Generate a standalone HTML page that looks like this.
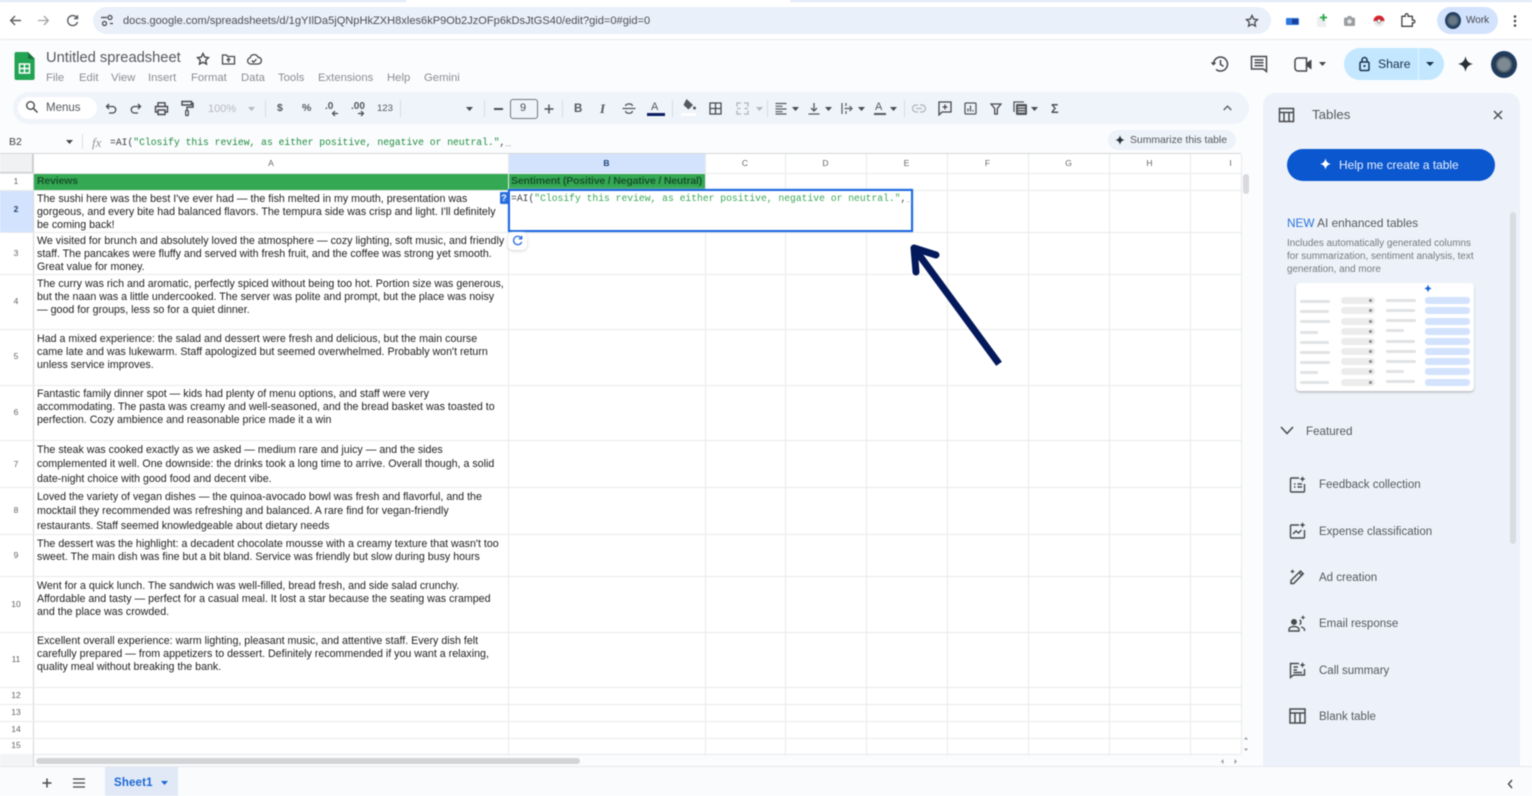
<!DOCTYPE html>
<html><head><meta charset="utf-8"><title>Untitled spreadsheet</title>
<style>
html,body{margin:0;padding:0;width:1532px;height:796px;overflow:hidden;background:#fff}
#p{position:relative;width:1532px;height:796px;overflow:hidden;font-family:"Liberation Sans",sans-serif;background:#fbfcfe;filter:blur(.5px)}
#p div,#p span.a,#p svg{position:absolute}
.t{white-space:nowrap;line-height:14px}
.m{font-size:11.3px;color:#8a8d91;top:71px}
.c{font-size:10.66px;color:#222;white-space:nowrap;line-height:13px;left:37px}
.h{font-size:8.5px;color:#666;text-align:center;line-height:12px}
.r{font-size:8.5px;color:#5f6368;left:0;width:32px;text-align:center;line-height:12px}
.hl{background:#e9eaeb;left:0;width:1241px;height:1px}
.vl{background:#e9eaeb;top:154px;width:1px;height:600px}
.i{fill:none;stroke:#47494c;stroke-width:1.5}
.f{font-size:11.5px;color:#55585c;left:1319px;white-space:nowrap;line-height:14px}
.b1{background:#e1e2e4;height:3px;border-radius:2px}
.b2{background:#ececed;height:7px;border-radius:4px;width:34px}
.b2::after{content:"";position:absolute;right:3px;top:2px;width:3px;height:3px;background:#8e9093;border-radius:1px}
.b3{background:#d3e3fd;height:7px;border-radius:3px;left:1425px;width:45px}
</style></head><body><div id="p">

<!-- browser chrome -->
<div style="left:0;top:0;width:1532px;height:40px;background:#fff"></div>
<div style="left:0;top:0;width:406px;height:2px;background:#dfe8f8"></div>
<div style="left:790px;top:0;width:742px;height:2px;background:#dfe8f8"></div>
<div style="left:0;top:39px;width:1532px;height:1px;background:#e6e8ec"></div>
<svg style="left:8px;top:13px" width="15" height="15" viewBox="0 0 15 15"><path d="M13 7.5H3M7 3L2.7 7.5 7 12" fill="none" stroke="#5b5e62" stroke-width="1.4"/></svg>
<svg style="left:36px;top:13px" width="15" height="15" viewBox="0 0 15 15"><path d="M2 7.5h10M8 3l4.3 4.5L8 12" fill="none" stroke="#a0a3a7" stroke-width="1.3"/></svg>
<svg style="left:65px;top:13px" width="15" height="15" viewBox="0 0 15 15"><path d="M12 5A5 5 0 1 0 12.500 9M12.500 2.200V5.500H9" fill="none" stroke="#5b5e62" stroke-width="1.4"/></svg>
<div style="left:93px;top:7px;width:1178px;height:27px;border-radius:14px;background:#e9f0fa"></div>
<svg style="left:100px;top:14px" width="14" height="13" viewBox="0 0 14 13"><path d="M1 3.500h6M10 9.500h3" stroke="#45484c" stroke-width="1.3" fill="none"/><circle cx="10" cy="3.500" r="2" fill="none" stroke="#45484c" stroke-width="1.2"/><circle cx="4.500" cy="9.500" r="2" fill="none" stroke="#45484c" stroke-width="1.2"/></svg>
<div class="t" style="left:123px;top:14px;font-size:11.08px;color:#4c5054">docs.google.com/spreadsheets/d/1gYIlDa5jQNpHkZXH8xles6kP9Ob2JzOFp6kDsJtGS40/edit?gid=0#gid=0</div>
<svg style="left:1245px;top:14px" width="14" height="14" viewBox="0 0 14 14"><path d="M7 1.500l1.700 3.600 3.800.5-2.800 2.600.8 3.900L7 10.200l-3.500 1.900.8-3.900L1.500 5.600l3.800-.5z" fill="none" stroke="#45484c" stroke-width="1.300"/></svg>
<div style="left:1286px;top:18px;width:13px;height:7px;background:#2f78e0;border-radius:1px"></div>
<div style="left:1292px;top:19px;width:6px;height:5px;background:#1a3f9a"></div>
<div style="left:1317px;top:17px;width:9px;height:10px;background:#eceef0"></div>
<svg style="left:1319px;top:13px" width="9" height="9" viewBox="0 0 9 9"><path d="M4.500 1v7M1 4.500h7" stroke="#2aa84a" stroke-width="1.800"/></svg>
<svg style="left:1343px;top:15px" width="13" height="12" viewBox="0 0 13 12"><rect x="1" y="2.500" width="11" height="8.500" rx="1.500" fill="#9b9ea1"/><rect x="4.500" y="1" width="4" height="2" fill="#9b9ea1"/><circle cx="6.500" cy="6.500" r="2.200" fill="#e5e6e7"/></svg>
<svg style="left:1372px;top:13px" width="14" height="16" viewBox="0 0 14 16"><path d="M1.500 8a5.500 5.500 0 0 1 11 0z" fill="#d9232e"/><path d="M1.500 8a5.500 5.500 0 0 0 11 0z" fill="#e9e9ea"/><circle cx="7" cy="8" r="1.800" fill="#fff" stroke="#555" stroke-width=".6"/></svg>
<svg style="left:1400px;top:12px" width="16" height="16" viewBox="0 0 16 16"><path d="M2 4h3.500V2.700a1.500 1.500 0 0 1 3 0V4H13v4h1.200a1.500 1.500 0 0 1 0 3H13v3.500H2z" fill="none" stroke="#43464a" stroke-width="1.400" transform="translate(0 .5) scale(.95)"/></svg>
<div style="left:1437px;top:7px;width:61px;height:27px;border-radius:14px;background:#d3e3fd"></div>
<div style="left:1445px;top:12px;width:16px;height:17px;border-radius:50%;background:radial-gradient(circle at 50% 50%,#6a7884 0 30%,#1e3b5c 60%,#345a86 100%)"></div>
<div class="t" style="left:1466px;top:14px;font-size:10px;color:#44474b">Work</div>
<svg style="left:1511px;top:14px" width="8" height="14" viewBox="0 0 8 14"><circle cx="4" cy="2.500" r="1.300" fill="#45484c"/><circle cx="4" cy="7" r="1.300" fill="#45484c"/><circle cx="4" cy="11.500" r="1.300" fill="#45484c"/></svg>

<!-- docs header -->
<svg style="left:14px;top:52px" width="22" height="28" viewBox="0 0 22 28"><path d="M2 0h12l7 7v19a2 2 0 0 1-2 2H2a2 2 0 0 1-2-2V2a2 2 0 0 1 2-2z" fill="#23a455" transform="translate(.5 0) scale(.96 1)"/><path d="M14 0l7 7h-7z" fill="#17713a"/><path d="M5.500 12h10v9h-10zM5.500 16.500h10M10.500 12v9" fill="none" stroke="#fff" stroke-width="1.500"/></svg>
<div class="t" style="left:46px;top:51px;font-size:14.7px;color:#55585c">Untitled spreadsheet</div>
<svg style="left:196px;top:52px" width="14" height="14" viewBox="0 0 14 14"><path d="M7 1.500l1.700 3.600 3.800.5-2.800 2.600.8 3.900L7 10.200l-3.500 1.900.8-3.900L1.500 5.600l3.800-.5z" fill="none" stroke="#47494c" stroke-width="1.400"/></svg>
<svg style="left:221px;top:52px" width="15" height="14" viewBox="0 0 15 14"><path d="M1.500 3h4l1 1.500h7V12h-12zM7.500 10.500V6.500M5.700 8.200l1.800-1.800 1.800 1.800" fill="none" stroke="#47494c" stroke-width="1.300"/></svg>
<svg style="left:246px;top:52px" width="16" height="14" viewBox="0 0 16 14"><path d="M4.500 12a3.200 3.200 0 0 1-.4-6.300A4.200 4.200 0 0 1 12 5.200 3.400 3.400 0 0 1 12 12zM5.800 8.500l1.700 1.700 3-3" fill="none" stroke="#47494c" stroke-width="1.300"/></svg>
<div class="t m" style="left:46px">File</div><div class="t m" style="left:79px">Edit</div><div class="t m" style="left:111px">View</div><div class="t m" style="left:148px">Insert</div><div class="t m" style="left:191px">Format</div><div class="t m" style="left:241px">Data</div><div class="t m" style="left:278px">Tools</div><div class="t m" style="left:318px">Extensions</div><div class="t m" style="left:387px">Help</div><div class="t m" style="left:424px">Gemini</div>

<svg style="left:1210px;top:54px" width="20" height="20" viewBox="0 0 20 20"><path d="M3.500 10A7 7 0 1 1 6 15.400M1.500 8.500l2 2 2-2M10.500 6v4.500l3 1.800" fill="none" stroke="#45484c" stroke-width="1.500"/></svg>
<svg style="left:1250px;top:55px" width="18" height="19" viewBox="0 0 18 19"><path d="M1.500 1.500h15v15l-3-2.500h-12zM4.500 5h9M4.500 7.800h9M4.500 10.600h9" fill="none" stroke="#45484c" stroke-width="1.500"/></svg>
<svg style="left:1294px;top:57px" width="19" height="15" viewBox="0 0 19 15"><path d="M4 1h8.500v13H4a3 3 0 0 1-3-3V4a3 3 0 0 1 3-3z" fill="none" stroke="#45484c" stroke-width="1.500"/><path d="M12.500 6l5-3.500v10l-5-3.500z" fill="#45484c"/></svg>
<svg style="left:1319px;top:62px" width="7" height="4"><path d="M0 0h7L3.500 4z" fill="#45484c"/></svg>
<div style="left:1344px;top:48px;width:100px;height:32px;border-radius:16px;background:#c2e7ff"></div>
<div style="left:1418px;top:48px;width:1px;height:32px;background:#eaf6ff"></div>
<svg style="left:1358px;top:56px" width="13" height="16" viewBox="0 0 13 16"><rect x="2" y="6" width="9" height="8.500" rx="1.200" fill="none" stroke="#1f3350" stroke-width="1.500"/><path d="M4 6V4a2.500 2.500 0 0 1 5 0v2" fill="none" stroke="#1f3350" stroke-width="1.500"/><circle cx="6.500" cy="10" r="1.100" fill="#1f3350"/></svg>
<div class="t" style="left:1378px;top:57px;font-size:12.200px;color:#1c2f4a">Share</div>
<svg style="left:1426px;top:62px" width="8" height="4"><path d="M0 0h8L4 4z" fill="#1c2f4a"/></svg>
<svg style="left:1458px;top:55px" width="15" height="18" viewBox="0 0 17 18"><path d="M8.500 0C9.300 5 11.500 8 17 9c-5.500 1-7.700 4-8.500 9C7.700 13 5.500 10 0 9c5.500-1 7.700-4 8.500-9z" fill="#263238"/></svg>
<div style="left:1491px;top:51px;width:26px;height:27px;border-radius:50%;background:radial-gradient(circle at 50% 50%,#7d8a94 0 30%,#23384f 48%,#1f4474 75%,#3b6aa0 100%)"></div>

<!-- toolbar -->
<div style="left:13px;top:92px;width:1236px;height:32px;border-radius:16px;background:#eff3fa"></div>
<div style="left:18px;top:97px;width:79px;height:22px;border-radius:11px;background:#fff"></div>
<svg style="left:25px;top:100px" width="14" height="14" viewBox="0 0 14 14"><circle cx="5.500" cy="5.500" r="3.800" fill="none" stroke="#47494c" stroke-width="1.400"/><path d="M8.300 8.300L12.500 12.500" stroke="#47494c" stroke-width="1.500"/></svg>
<div class="t" style="left:46px;top:101px;font-size:11.5px;color:#54575b">Menus</div>
<svg style="left:104px;top:102px" width="14" height="13" viewBox="0 0 14 13"><path d="M5 2L2.500 4.500 5 7M3 4.500h5.500a3 3 0 0 1 0 6.500H5" fill="none" stroke="#47494c" stroke-width="1.300"/></svg>
<svg style="left:129px;top:102px" width="14" height="13" viewBox="0 0 14 13"><path d="M9 2l2.500 2.500L9 7M11 4.500H5.500a3 3 0 0 0 0 6.500H9" fill="none" stroke="#47494c" stroke-width="1.300"/></svg>
<svg style="left:154px;top:101px" width="15" height="15" viewBox="0 0 15 15"><path d="M4 5V1.800h7V5M4 11H1.500V5.500h12V11H11M4 9h7v4.500H4z" fill="none" stroke="#47494c" stroke-width="1.400"/></svg>
<svg style="left:180px;top:100px" width="14" height="17" viewBox="0 0 14 17"><path d="M2 1.500h9.500v3.500H2zM11.500 3.200h1.500v4H7v3" fill="none" stroke="#47494c" stroke-width="1.400"/><rect x="5.700" y="10.500" width="2.600" height="5" rx=".8" fill="none" stroke="#47494c" stroke-width="1.200"/></svg>
<div class="t" style="left:208px;top:102px;font-size:11px;color:#b8babd">100%</div>
<svg style="left:248px;top:107px" width="7" height="4"><path d="M0 0h7L3.500 4z" fill="#b5b7ba"/></svg>
<div style="left:265px;top:100px;width:1px;height:17px;background:#d9dce1"></div>
<div class="t" style="left:277px;top:101px;font-size:10.500px;font-weight:bold;color:#55585c">$</div>
<div class="t" style="left:302px;top:101px;font-size:10.500px;font-weight:bold;color:#55585c">%</div>
<div class="t" style="left:325px;top:100px;font-size:10px;font-weight:bold;color:#55585c">.0</div>
<svg style="left:331px;top:110px" width="8" height="7" viewBox="0 0 8 7"><path d="M7 3.500H2M4 1L1.500 3.500 4 6" fill="none" stroke="#47494c" stroke-width="1.200"/></svg>
<div class="t" style="left:351px;top:100px;font-size:10px;font-weight:bold;color:#55585c">.00</div>
<svg style="left:357px;top:110px" width="8" height="7" viewBox="0 0 8 7"><path d="M1 3.500h5M4 1l2.500 2.500L4 6" fill="none" stroke="#47494c" stroke-width="1.200"/></svg>
<div class="t" style="left:377px;top:102px;font-size:9.500px;color:#55585c">123</div>
<div style="left:400px;top:100px;width:1px;height:17px;background:#d9dce1"></div>
<svg style="left:466px;top:107px" width="7" height="4"><path d="M0 0h7L3.500 4z" fill="#47494c"/></svg>
<div style="left:484px;top:100px;width:1px;height:17px;background:#d9dce1"></div>
<div style="left:494px;top:108px;width:9px;height:1.500px;background:#4b4e52"></div>
<div style="left:510px;top:99px;width:26px;height:18px;border:1px solid #75787c;border-radius:3px"></div>
<div class="t" style="left:520px;top:101px;font-size:11px;color:#4b4e52">9</div>
<svg style="left:544px;top:104px" width="10" height="10"><path d="M5 .5v9M.5 5h9" stroke="#4b4e52" stroke-width="1.400"/></svg>
<div style="left:562px;top:100px;width:1px;height:17px;background:#d9dce1"></div>
<div class="t" style="left:574px;top:102px;font-size:11.500px;font-weight:bold;color:#55585c">B</div>
<div class="t" style="left:600px;top:102px;font-size:13px;font-weight:bold;font-style:italic;font-family:'Liberation Serif',serif;color:#55585c">I</div>
<svg style="left:622px;top:102px" width="14" height="13" viewBox="0 0 14 13"><path d="M3.500 4C3.800 1.500 10 1 10.500 4M.5 6.500h13M3.500 9c.5 3 6.500 3 7 0" fill="none" stroke="#55585c" stroke-width="1.300"/></svg>
<div class="t" style="left:651px;top:100px;font-size:11px;color:#55585c">A</div>
<div style="left:647px;top:113px;width:18px;height:3px;background:#0b2060"></div>
<div style="left:672px;top:100px;width:1px;height:17px;background:#d9dce1"></div>
<svg style="left:681px;top:98px" width="16" height="14" viewBox="0 0 16 14"><path d="M5.500 1L12 7l-4.500 4.500L2.500 7z" fill="#55585c"/><circle cx="13.500" cy="10" r="1.500" fill="#55585c"/></svg>
<div style="left:681px;top:113px;width:15px;height:3px;background:#fff"></div>
<svg style="left:709px;top:102px" width="13" height="13" viewBox="0 0 13 13"><path d="M1 1h11v11H1zM1 6.500h11M6.500 1v11" fill="none" stroke="#47494c" stroke-width="1.300"/></svg>
<svg style="left:736px;top:102px" width="13" height="13" viewBox="0 0 13 13"><path d="M1 4.500V1h4M8 1h4v3.500M1 8.500V12h4M8 12h4V8.500M1 6.500h3.500M8.500 6.500H12" fill="none" stroke="#b2b4b7" stroke-width="1.300"/></svg>
<svg style="left:756px;top:107px" width="7" height="4"><path d="M0 0h7L3.500 4z" fill="#b5b7ba"/></svg>
<div style="left:767px;top:100px;width:1px;height:17px;background:#d9dce1"></div>
<svg style="left:775px;top:102px" width="12" height="13" viewBox="0 0 12 13"><path d="M.5 1.500h11M.5 4.300h7M.5 7h11M.5 9.700h7M.5 12h11" stroke="#55585c" stroke-width="1.200"/></svg>
<svg style="left:792px;top:107px" width="7" height="4"><path d="M0 0h7L3.500 4z" fill="#47494c"/></svg>
<svg style="left:808px;top:102px" width="12" height="13" viewBox="0 0 12 13"><path d="M6 1v7.500M3 6l3 3 3-3M.5 12h11" fill="none" stroke="#55585c" stroke-width="1.300"/></svg>
<svg style="left:825px;top:107px" width="7" height="4"><path d="M0 0h7L3.500 4z" fill="#47494c"/></svg>
<svg style="left:841px;top:102px" width="12" height="13" viewBox="0 0 12 13"><path d="M1 1v11M5 1v3M5 9v3M3.500 6.500H11M8.500 4l2.500 2.500L8.500 9" fill="none" stroke="#55585c" stroke-width="1.200"/></svg>
<svg style="left:858px;top:107px" width="7" height="4"><path d="M0 0h7L3.500 4z" fill="#47494c"/></svg>
<div class="t" style="left:875px;top:100px;font-size:11px;color:#55585c">A</div>
<div style="left:874px;top:113px;width:12px;height:1.500px;background:#55585c"></div>
<svg style="left:890px;top:107px" width="7" height="4"><path d="M0 0h7L3.500 4z" fill="#47494c"/></svg>
<div style="left:904px;top:100px;width:1px;height:17px;background:#d9dce1"></div>
<svg style="left:912px;top:104px" width="14" height="9" viewBox="0 0 14 9"><path d="M6 1H4a3.300 3.300 0 0 0 0 7h2M8 1h2a3.300 3.300 0 0 1 0 7H8M4 4.500h6" fill="none" stroke="#b2b4b7" stroke-width="1.200"/></svg>
<svg style="left:938px;top:101px" width="14" height="15" viewBox="0 0 14 15"><path d="M1 1h12v10H4l-3 3zM7 3.500v5M4.500 6h5" fill="none" stroke="#47494c" stroke-width="1.300"/></svg>
<svg style="left:964px;top:102px" width="13" height="13" viewBox="0 0 13 13"><rect x="1" y="1" width="11" height="11" rx="1" fill="none" stroke="#55585c" stroke-width="1.300"/><path d="M4 9.500V6.500M6.500 9.500V3.500M9 9.500V8" stroke="#55585c" stroke-width="1.300"/></svg>
<svg style="left:990px;top:103px" width="12" height="12" viewBox="0 0 12 12"><path d="M1 1h10L7.300 5.500V11H4.700V5.500z" fill="none" stroke="#47494c" stroke-width="1.300"/></svg>
<svg style="left:1013px;top:101px" width="15" height="15" viewBox="0 0 15 15"><rect x="3" y="3" width="11" height="11" rx="1" fill="#55585c"/><path d="M1 11V1h10" fill="none" stroke="#55585c" stroke-width="1.300"/><path d="M5 6h7M5 8.500h7M5 11h7" stroke="#eff3fa" stroke-width="1"/></svg>
<svg style="left:1031px;top:107px" width="7" height="4"><path d="M0 0h7L3.500 4z" fill="#47494c"/></svg>
<div class="t" style="left:1051px;top:102px;font-size:12.500px;font-weight:bold;color:#4f5256">Σ</div>
<svg style="left:1223px;top:105px" width="9" height="6" viewBox="0 0 9 6"><path d="M.7 5L4.500 1.200 8.300 5" fill="none" stroke="#55585c" stroke-width="1.300"/></svg>

<!-- formula bar -->
<div class="t" style="left:9px;top:135px;font-size:10.500px;color:#3c4043">B2</div>
<svg style="left:66px;top:140px" width="7" height="4"><path d="M0 0h7L3.500 4z" fill="#47494c"/></svg>
<div style="left:82px;top:134px;width:1px;height:15px;background:#dcdfe3"></div>
<div class="t" style="left:92px;top:136px;font-size:13px;font-style:italic;font-family:'Liberation Serif',serif;color:#909398">fx</div>
<div class="t" style="left:110px;top:136px;font-size:9.7px;font-family:'Liberation Mono',monospace;color:#3c4043">=AI(<span style="color:#1e8e3e">"Closify this review, as either positive, negative or neutral."</span>,<span style="color:#aaa">_</span></div>
<div style="left:1108px;top:130px;width:128px;height:20px;border-radius:10px;background:#eef2f9"></div>
<svg style="left:1115px;top:135px" width="10" height="10" viewBox="0 0 17 18"><path d="M8.500 0C9.300 5 11.500 8 17 9c-5.500 1-7.700 4-8.500 9C7.700 13 5.500 10 0 9c5.500-1 7.700-4 8.500-9z" fill="#263238"/></svg>
<div class="t" style="left:1130px;top:134px;font-size:10.400px;color:#55585c">Summarize this table</div>

<!-- sheet -->
<div style="left:0;top:153px;width:1241px;height:601px;background:#fff"></div>
<div style="left:0;top:153px;width:1241px;height:1px;background:#d5d7da"></div>
<div style="left:0;top:154px;width:32px;height:19px;background:#f0f1f2"></div>
<div style="left:32px;top:154px;width:2px;height:19px;background:#c7c9cc"></div>
<div style="left:0;top:172px;width:34px;height:2px;background:#c7c9cc"></div>
<div style="left:508px;top:154px;width:197px;height:19px;background:#d3e3fd"></div>
<div style="left:0;top:190px;width:33px;height:42px;background:#d3e3fd"></div>
<div style="left:34px;top:173px;width:671px;height:17px;background:#34a853"></div>

<div class="vl" style="left:33px;background:#d4d6d9"></div>
<div class="vl" style="left:508px"></div><div class="vl" style="left:705px"></div><div class="vl" style="left:785px"></div><div class="vl" style="left:866px"></div><div class="vl" style="left:947px"></div><div class="vl" style="left:1028px"></div><div class="vl" style="left:1109px"></div><div class="vl" style="left:1190px"></div><div class="vl" style="left:1241px"></div>
<div class="hl" style="top:173px"></div><div class="hl" style="top:190px"></div><div class="hl" style="top:232px"></div><div class="hl" style="top:274px"></div><div class="hl" style="top:329px"></div><div class="hl" style="top:385px"></div><div class="hl" style="top:440px"></div><div class="hl" style="top:487px"></div><div class="hl" style="top:534px"></div><div class="hl" style="top:576px"></div><div class="hl" style="top:632px"></div><div class="hl" style="top:687px"></div><div class="hl" style="top:704px"></div><div class="hl" style="top:721px"></div><div class="hl" style="top:738px"></div><div class="hl" style="top:754px"></div>

<div class="h" style="left:34px;width:474px;top:157px">A</div><div class="h" style="left:508px;width:197px;top:157px;color:#1f3f73;font-weight:bold">B</div><div class="h" style="left:705px;width:80px;top:157px">C</div><div class="h" style="left:785px;width:81px;top:157px">D</div><div class="h" style="left:866px;width:81px;top:157px">E</div><div class="h" style="left:947px;width:81px;top:157px">F</div><div class="h" style="left:1028px;width:81px;top:157px">G</div><div class="h" style="left:1109px;width:81px;top:157px">H</div><div class="h" style="left:1190px;width:81px;top:157px">I</div>

<div class="r" style="top:175px">1</div><div class="r" style="top:203px;font-weight:bold;color:#1f3f73">2</div><div class="r" style="top:247px">3</div><div class="r" style="top:295px">4</div><div class="r" style="top:350px">5</div><div class="r" style="top:406px">6</div><div class="r" style="top:458px">7</div><div class="r" style="top:504px">8</div><div class="r" style="top:549px">9</div><div class="r" style="top:598px">10</div><div class="r" style="top:653px">11</div><div class="r" style="top:689px">12</div><div class="r" style="top:706px">13</div><div class="r" style="top:723px">14</div><div class="r" style="top:739px">15</div>

<div class="c" style="top:175px;font-weight:bold;color:#17532b;font-size:10.55px;letter-spacing:-.2px">Reviews</div>
<div class="c" style="top:175px;left:511px;font-weight:bold;color:#17532b;font-size:10.55px;letter-spacing:-.2px">Sentiment (Positive / Negative / Neutral)</div>

<div class="c" style="top:193px">The sushi here was the best I've ever had — the fish melted in my mouth, presentation was</div>
<div class="c" style="top:206px">gorgeous, and every bite had balanced flavors. The tempura side was crisp and light. I'll definitely</div>
<div class="c" style="top:219px">be coming back!</div>
<div class="c" style="top:235px">We visited for brunch and absolutely loved the atmosphere — cozy lighting, soft music, and friendly</div>
<div class="c" style="top:248px">staff. The pancakes were fluffy and served with fresh fruit, and the coffee was strong yet smooth.</div>
<div class="c" style="top:261px">Great value for money.</div>
<div class="c" style="top:278px">The curry was rich and aromatic, perfectly spiced without being too hot. Portion size was generous,</div>
<div class="c" style="top:291px">but the naan was a little undercooked. The server was polite and prompt, but the place was noisy</div>
<div class="c" style="top:304px">— good for groups, less so for a quiet dinner.</div>
<div class="c" style="top:333px">Had a mixed experience: the salad and dessert were fresh and delicious, but the main course</div>
<div class="c" style="top:346px">came late and was lukewarm. Staff apologized but seemed overwhelmed. Probably won't return</div>
<div class="c" style="top:359px">unless service improves.</div>
<div class="c" style="top:388px">Fantastic family dinner spot — kids had plenty of menu options, and staff were very</div>
<div class="c" style="top:401px">accommodating. The pasta was creamy and well-seasoned, and the bread basket was toasted to</div>
<div class="c" style="top:414px">perfection. Cozy ambience and reasonable price made it a win</div>
<div class="c" style="top:444px">The steak was cooked exactly as we asked — medium rare and juicy — and the sides</div>
<div class="c" style="top:458px">complemented it well. One downside: the drinks took a long time to arrive. Overall though, a solid</div>
<div class="c" style="top:473px">date-night choice with good food and decent vibe.</div>
<div class="c" style="top:491px">Loved the variety of vegan dishes — the quinoa-avocado bowl was fresh and flavorful, and the</div>
<div class="c" style="top:505px">mocktail they recommended was refreshing and balanced. A rare find for vegan-friendly</div>
<div class="c" style="top:520px">restaurants. Staff seemed knowledgeable about dietary needs</div>
<div class="c" style="top:538px">The dessert was the highlight: a decadent chocolate mousse with a creamy texture that wasn't too</div>
<div class="c" style="top:551px">sweet. The main dish was fine but a bit bland. Service was friendly but slow during busy hours</div>
<div class="c" style="top:580px">Went for a quick lunch. The sandwich was well-filled, bread fresh, and side salad crunchy.</div>
<div class="c" style="top:593px">Affordable and tasty — perfect for a casual meal. It lost a star because the seating was cramped</div>
<div class="c" style="top:606px">and the place was crowded.</div>
<div class="c" style="top:635px">Excellent overall experience: warm lighting, pleasant music, and attentive staff. Every dish felt</div>
<div class="c" style="top:648px">carefully prepared — from appetizers to dessert. Definitely recommended if you want a relaxing,</div>
<div class="c" style="top:661px">quality meal without breaking the bank.</div>

<!-- active cell -->
<div style="left:508px;top:189px;width:401px;height:39px;border:2px solid #1a66e0;background:#fff;box-shadow:0 0 2px #a9c5f5"></div>
<div style="left:500px;top:192px;width:8px;height:12px;background:#2b6fe0;color:#fff;font-size:9px;font-weight:bold;line-height:12px;text-align:center;border-radius:1px 0 0 1px">?</div>
<div class="t" style="left:511px;top:192px;font-size:9.7px;font-family:'Liberation Mono',monospace;color:#3c4043">=AI(<span style="color:#3aa856">"Closify this review, as either positive, negative or neutral."</span>,<span style="color:#bbb">_</span></div>
<div style="left:508px;top:232px;width:19px;height:18px;border-radius:5px;background:#fff;box-shadow:0 1px 3px #d0d2d6"></div>
<svg style="left:512px;top:235px" width="11" height="11" viewBox="0 0 11 11"><path d="M9.500 3.500A4.200 4.200 0 1 0 9.700 7M9.700 .8v3H6.800" fill="none" stroke="#2b6fe0" stroke-width="1.300"/></svg>

<!-- arrow -->
<svg style="left:900px;top:235px" width="110" height="140" viewBox="0 0 110 140"><path d="M97 126L17 17" stroke="#04195c" stroke-width="7" stroke-linecap="square" fill="none"/><path d="M16 37L14 13 36 20" stroke="#04195c" stroke-width="7" stroke-linecap="round" stroke-linejoin="round" fill="none"/></svg>

<!-- sheet scrollbars -->
<div style="left:1243px;top:174px;width:6px;height:20px;background:#d8dadd;border-radius:3px"></div>
<div style="left:36px;top:758px;width:544px;height:6px;background:#d3d4d6;border-radius:3px"></div>
<div style="left:0;top:754px;width:34px;height:12px;background:#f3f4f5"></div>
<div style="left:33px;top:754px;width:1px;height:12px;background:#d4d6d9"></div>
<svg style="left:1243px;top:736px" width="6" height="16" viewBox="0 0 6 16"><path d="M1 3.500L3 1l2 2.500zM1 12.500L3 15l2-2.500z" fill="#9a9c9f"/></svg>
<svg style="left:1219px;top:758px" width="20" height="7" viewBox="0 0 20 7"><path d="M4.500 1L2 3.500 4.500 6zM15.500 1L18 3.500 15.500 6z" fill="#9a9c9f"/></svg>
<div style="left:0;top:766px;width:1532px;height:1px;background:#e6e8ec"></div>

<!-- bottom bar -->
<div style="left:0;top:767px;width:1532px;height:29px;background:#fafbfd"></div>
<svg style="left:42px;top:778px" width="10" height="10"><path d="M5 .5v9M.5 5h9" stroke="#47494c" stroke-width="1.500"/></svg>
<svg style="left:73px;top:778px" width="12" height="10"><path d="M0 1h12M0 5h12M0 9h12" stroke="#47494c" stroke-width="1.300"/></svg>
<div style="left:105px;top:767px;width:73px;height:29px;background:#e1e9f7"></div>
<div class="t" style="left:114px;top:776px;font-size:11.500px;font-weight:bold;color:#1a67d2;letter-spacing:.15px">Sheet1</div>
<svg style="left:161px;top:781px" width="7" height="4"><path d="M0 0h7L3.500 4z" fill="#1a67d2"/></svg>
<svg style="left:1507px;top:779px" width="6" height="10" viewBox="0 0 6 10"><path d="M5 1L1.500 5 5 9" fill="none" stroke="#47494c" stroke-width="1.400"/></svg>

<!-- side panel -->
<div style="left:1263px;top:93px;width:257px;height:673px;background:#edf2fa;border-radius:12px 12px 0 0"></div>
<svg style="left:1278px;top:107px" width="18" height="16" viewBox="0 0 18 16"><path d="M1.500 1.500h14v13h-14zM1.500 5.500h14M6 5.500v9M11 5.500v9" class="i"/></svg>
<div class="t" style="left:1312px;top:108px;font-size:13.3px;color:#55585c">Tables</div>
<svg style="left:1493px;top:110px" width="10" height="10"><path d="M1 1l8 8M9 1l-8 8" stroke="#47494c" stroke-width="1.400"/></svg>
<div style="left:1287px;top:149px;width:208px;height:32px;border-radius:16px;background:#0b57d0"></div>
<svg style="left:1320px;top:158px" width="11" height="12" viewBox="0 0 17 18"><path d="M8.500 0C9.300 5 11.500 8 17 9c-5.500 1-7.700 4-8.500 9C7.700 13 5.500 10 0 9c5.500-1 7.700-4 8.500-9z" fill="#fff"/></svg>
<div class="t" style="left:1339px;top:158px;font-size:11.9px;color:#eaf1fd">Help me create a table</div>
<div class="t" style="left:1287px;top:216px;font-size:11.8px;color:#55585c"><span style="color:#2a72dc">NEW</span> AI enhanced tables</div>
<div class="t" style="left:1287px;top:237px;font-size:9.9px;color:#75787c">Includes automatically generated columns</div>
<div class="t" style="left:1287px;top:250px;font-size:9.9px;color:#75787c">for summarization, sentiment analysis, text</div>
<div class="t" style="left:1287px;top:263px;font-size:9.9px;color:#75787c">generation, and more</div>
<div style="left:1510px;top:212px;width:6px;height:332px;background:#d9dce1;border-radius:3px"></div>

<!-- illustration -->
<div style="left:1296px;top:283px;width:178px;height:108px;background:#fff;border-radius:4px;box-shadow:0 1.500px 2px #b9bbbe"></div>
<svg style="left:1424px;top:284px" width="8" height="9" viewBox="0 0 17 18"><path d="M8.500 0C9.300 5 11.500 8 17 9c-5.500 1-7.700 4-8.500 9C7.700 13 5.500 10 0 9c5.500-1 7.700-4 8.500-9z" fill="#1a67d2"/></svg>
<div class="b1" style="left:1300px;top:300px;width:30px"></div><div class="b2" style="left:1341px;top:297px"></div><div class="b1" style="left:1386px;top:299px;width:30px"></div><div class="b3" style="top:297px"></div>
<div class="b1" style="left:1300px;top:310px;width:29px"></div><div class="b2" style="left:1341px;top:307px"></div><div class="b1" style="left:1386px;top:309px;width:29px"></div><div class="b3" style="top:307px"></div>
<div class="b1" style="left:1300px;top:320px;width:30px"></div><div class="b2" style="left:1341px;top:318px"></div><div class="b1" style="left:1386px;top:319px;width:30px"></div><div class="b3" style="top:318px"></div>
<div class="b1" style="left:1300px;top:331px;width:18px"></div><div class="b2" style="left:1341px;top:328px"></div><div class="b1" style="left:1386px;top:329px;width:18px"></div><div class="b3" style="top:328px"></div>
<div class="b1" style="left:1300px;top:341px;width:29px"></div><div class="b2" style="left:1341px;top:338px"></div><div class="b1" style="left:1386px;top:340px;width:29px"></div><div class="b3" style="top:338px"></div>
<div class="b1" style="left:1300px;top:351px;width:30px"></div><div class="b2" style="left:1341px;top:348px"></div><div class="b1" style="left:1386px;top:350px;width:30px"></div><div class="b3" style="top:348px"></div>
<div class="b1" style="left:1300px;top:361px;width:30px"></div><div class="b2" style="left:1341px;top:358px"></div><div class="b1" style="left:1386px;top:360px;width:30px"></div><div class="b3" style="top:358px"></div>
<div class="b1" style="left:1300px;top:371px;width:18px"></div><div class="b2" style="left:1341px;top:368px"></div><div class="b1" style="left:1386px;top:370px;width:18px"></div><div class="b3" style="top:368px"></div>
<div class="b1" style="left:1300px;top:381px;width:29px"></div><div class="b2" style="left:1341px;top:379px"></div><div class="b1" style="left:1386px;top:380px;width:29px"></div><div class="b3" style="top:379px"></div>

<svg style="left:1280px;top:426px" width="14" height="9" viewBox="0 0 14 9"><path d="M1 1l6 6.500L13 1" fill="none" stroke="#47494c" stroke-width="1.500"/></svg>
<div class="t" style="left:1306px;top:425px;font-size:11.6px;color:#55585c">Featured</div>

<svg style="left:1289px;top:476px" width="17" height="17" viewBox="0 0 17 17"><path d="M10 2H2.500a1 1 0 0 0-1 1v12a1 1 0 0 0 1 1h12a1 1 0 0 0 1-1V8M5 8h1.500M5 11h1.500M8.500 8H13M8.500 11H13" fill="none" stroke="#47494c" stroke-width="1.400"/><path d="M13.500 0l.9 2.100 2.100.9-2.100.9-.9 2.100-.9-2.100-2.100-.9 2.100-.9z" fill="#47494c"/></svg>
<div class="f" style="top:478px">Feedback collection</div>
<svg style="left:1289px;top:522px" width="17" height="17" viewBox="0 0 17 17"><path d="M10 3H2.500a1 1 0 0 0-1 1v11a1 1 0 0 0 1 1h12a1 1 0 0 0 1-1V8M4 12l3-3 2.500 2 3-3" fill="none" stroke="#47494c" stroke-width="1.400"/><path d="M13.500 0l.9 2.100 2.100.9-2.100.9-.9 2.100-.9-2.100-2.100-.9 2.100-.9z" fill="#47494c"/></svg>
<div class="f" style="top:525px">Expense classification</div>
<svg style="left:1289px;top:568px" width="17" height="17" viewBox="0 0 17 17"><path d="M2 15.500v-3L11.500 3l2.700 2.700-9.500 9.800zM10 4.500l3 3" fill="none" stroke="#47494c" stroke-width="1.500"/><path d="M3.500 1l.7 1.800 1.800.7-1.800.7-.7 1.800-.7-1.800L1 3.500l1.800-.7z" fill="#47494c"/></svg>
<div class="f" style="top:571px">Ad creation</div>
<svg style="left:1288px;top:615px" width="18" height="17" viewBox="0 0 18 17"><circle cx="6" cy="7" r="2.500" fill="#47494c" stroke="#47494c" stroke-width="1"/><path d="M1 16v-1.500c0-2 2.500-3 5-3s5 1 5 3V16zM11.500 5a2.500 2.500 0 0 1 0 4.500M13 12c2 .4 3.500 1.300 3.500 3v1" fill="none" stroke="#47494c" stroke-width="1.400"/><path d="M15 0l.7 1.800 1.800.7-1.800.7-.7 1.800-.7-1.800-1.800-.7 1.800-.7z" fill="#47494c"/></svg>
<div class="f" style="top:617px">Email response</div>
<svg style="left:1289px;top:661px" width="17" height="18" viewBox="0 0 17 18"><path d="M10 2.500H1.500v14l3-2.500h11V8M4.500 6H9M4.500 9H8M4.500 11.500H13" fill="none" stroke="#47494c" stroke-width="1.400"/><path d="M13.500 1l.9 2.100 2.100.9-2.100.9-.9 2.100-.9-2.100-2.100-.9 2.100-.9z" fill="#47494c"/></svg>
<div class="f" style="top:664px">Call summary</div>
<svg style="left:1289px;top:708px" width="17" height="16" viewBox="0 0 17 16"><path d="M1 1h15v14H1zM1 5h15M6 5v10M11 5v10" fill="none" stroke="#47494c" stroke-width="1.500"/></svg>
<div class="f" style="top:710px">Blank table</div>
</div></body></html>
